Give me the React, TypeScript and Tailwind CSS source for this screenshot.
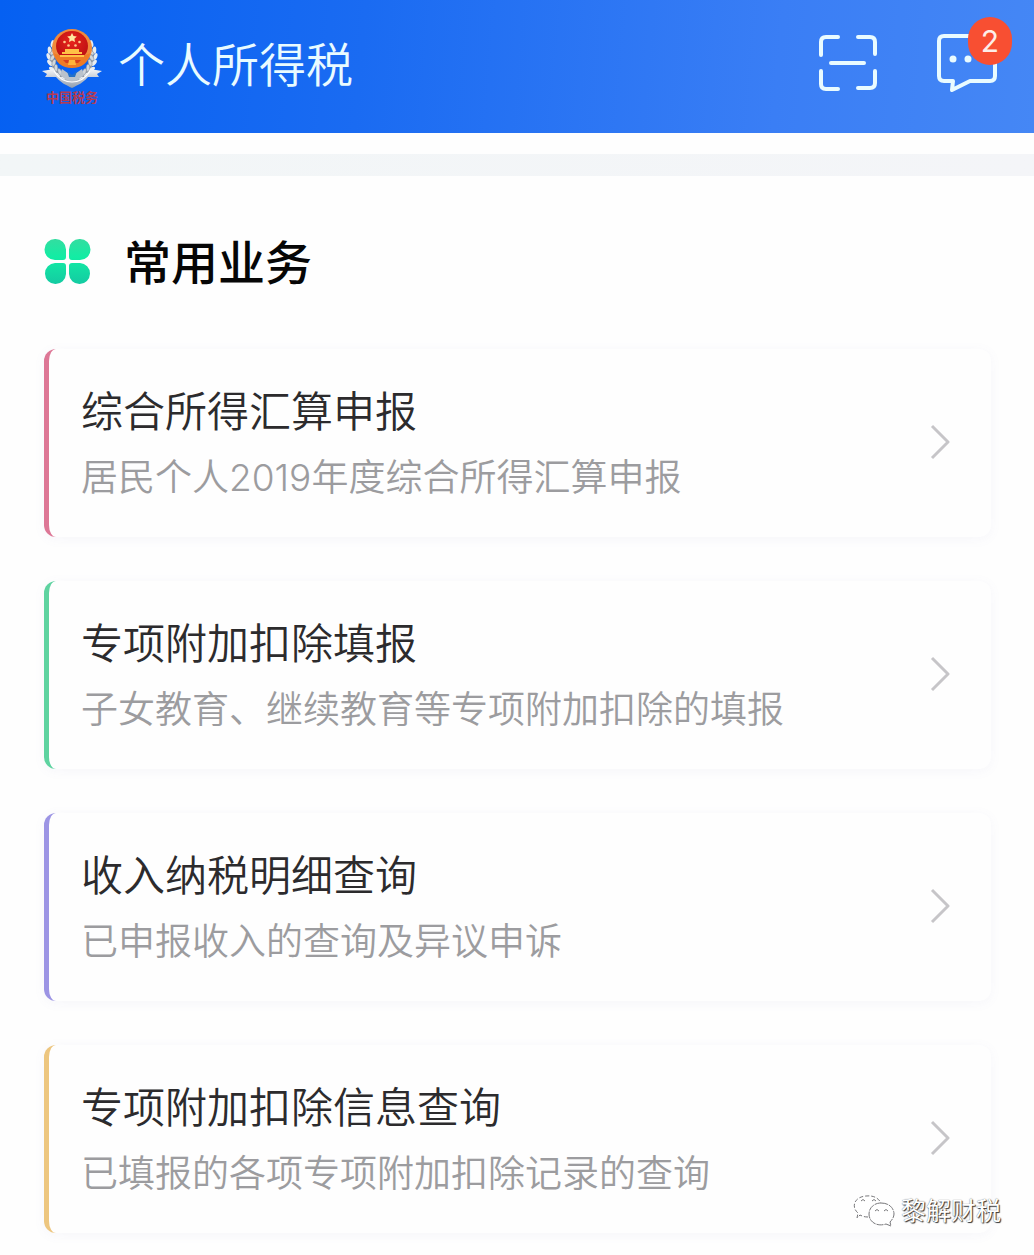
import React from 'react';

type Service = {
  title: string;
  description: string;
  accent: string;
};

const services: Service[] = [
  { title: '综合所得汇算申报', description: '居民个人2019年度综合所得汇算申报', accent: 'border-[#dd7796]' },
  { title: '专项附加扣除填报', description: '子女教育、继续教育等专项附加扣除的填报', accent: 'border-[#5ed3a0]' },
  { title: '收入纳税明细查询', description: '已申报收入的查询及异议申诉', accent: 'border-[#9c94e4]' },
  { title: '专项附加扣除信息查询', description: '已填报的各项专项附加扣除记录的查询', accent: 'border-[#edc67f]' },
];

const leaves = [
  [20, 48, 65], [15, 44, 50], [11, 39, 32], [9, 33, 12], [8, 27, -5], [9, 21, -22], [12, 15, -38],
];

function Emblem() {
  return (
    <svg viewBox="0 0 60 60" className="h-[60px] w-[60px]" aria-hidden="true">
      <defs>
        <linearGradient id="ribbon" x1="0" y1="0" x2="0" y2="1">
          <stop offset="0" stopColor="#f4f6f8" />
          <stop offset="1" stopColor="#8f9cae" />
        </linearGradient>
        <radialGradient id="disc" cx="0.5" cy="0.35" r="0.65">
          <stop offset="0" stopColor="#e8251c" />
          <stop offset="1" stopColor="#b90f12" />
        </radialGradient>
      </defs>
      {[false, true].map((mirrored) => (
        <g key={String(mirrored)} transform={mirrored ? 'translate(60 0) scale(-1 1)' : undefined}>
          <path d="M27 53C15 48 8 37 11 20" fill="none" stroke="#8d97a4" strokeWidth="4" />
          {leaves.map(([x, y, angle]) => (
            <g key={y} transform={`translate(${x} ${y}) rotate(${-angle})`}>
              <ellipse cx="-1.5" cy="0" rx="1.8" ry="3.6" fill="#e9edf0" transform="rotate(-25)" />
              <ellipse cx="3" cy="0" rx="1.8" ry="3.6" fill="#d2d7dc" stroke="#7d8590" strokeWidth="0.5" transform="rotate(28)" />
            </g>
          ))}
        </g>
      ))}
      <path d="M20 40l10 7 10-7 2 6-12 9-12-9z" fill="#b9c2cc" />
      <path d="M25 42l5 4 5-4-2 6h-6z" fill="#2470c8" />
      <path d="M0 42L12 40C16 48 22 52 30 51C38 52 44 48 48 40L60 42L55 45L57 48L46 48C41 54 36 56 30 59C24 56 19 54 14 48L3 48L5 45Z" fill="url(#ribbon)" />
      <path d="M12 42C17 50 23 53 30 53C37 53 43 50 48 42" fill="none" stroke="#ffffff" strokeWidth="1.2" />
      <ellipse cx="30" cy="19" rx="20" ry="19" fill="#f08a3c" />
      <ellipse cx="30" cy="17" rx="16" ry="15" fill="url(#disc)" />
      <path d="M12 24c4 4 32 4 36 0c-1 9-8 15-18 15c-10 0-17-6-18-15z" fill="#ee7b25" />
      <path d="M20 25h20v-2h-3v-3H23v3h-3zM18 28h24v-2H18z" fill="#ffc246" />
      <path d="M21 31h7v3h-4zM32 31h7l-3 3h-4z" fill="#d8401e" />
      <path d="M27 31h6l1 5h-8z" fill="#ffb43a" />
      <path d="M30 4l1.5 3 3.3.4-2.4 2.3.6 3.3-3-1.6-3 1.6.6-3.3-2.4-2.3 3.3-.4z" fill="#ffe9a0" />
      <circle cx="22.5" cy="13" r="1.3" fill="#ffc98a" />
      <circle cx="37.5" cy="13" r="1.3" fill="#ffc98a" />
      <circle cx="26.5" cy="16.5" r="1.3" fill="#ffc98a" />
      <circle cx="33.5" cy="16.5" r="1.3" fill="#ffc98a" />
    </svg>
  );
}

function ScanIcon() {
  return (
    <svg viewBox="0 0 60 58" className="h-[58px] w-[60px]" fill="none" stroke="#e9fbff" strokeWidth="4" strokeLinecap="round" strokeLinejoin="round" aria-hidden="true">
      <path d="M20 3H8Q3 3 3 8V21M40 3H52Q57 3 57 8V20M57 37V49Q57 54 52 54H40M20 55H8Q3 55 3 50V37M13 29H46" />
    </svg>
  );
}

function MessageIcon() {
  return (
    <svg viewBox="0 0 62 60" className="h-[60px] w-[62px]" fill="none" aria-hidden="true">
      <path d="M8 3H54Q59 3 59 8V43Q59 48 54 48H34L16 57L17 48H8Q3 48 3 43V8Q3 3 8 3Z" stroke="#e9fbff" strokeWidth="4" strokeLinejoin="round" />
      <circle cx="17" cy="26" r="3.5" fill="#e9fbff" />
      <circle cx="32" cy="26" r="3.5" fill="#e9fbff" />
      <circle cx="47" cy="26" r="3.5" fill="#e9fbff" />
    </svg>
  );
}

function CloverIcon() {
  return (
    <svg viewBox="0 0 48 48" className="h-12 w-12" aria-hidden="true">
      <defs>
        <linearGradient id="clover" x1="0" y1="0" x2="0" y2="48" gradientUnits="userSpaceOnUse">
          <stop offset="0" stopColor="#35dca0" />
          <stop offset="0.4" stopColor="#12eda4" />
          <stop offset="1" stopColor="#14c8a2" />
        </linearGradient>
      </defs>
      <path
        fill="url(#clover)"
        d="M11 1A10.5 10.5 0 0 1 22 12V19Q22 22 19 22H11A10.5 10.5 0 0 1 11 1ZM36 1A10.5 10.5 0 0 1 36 22H28Q25 22 25 19V12A10.5 10.5 0 0 1 36 1ZM11 25H19Q22 25 22 28V36A10.5 10.5 0 1 1 11 25ZM28 25H36A10.5 10.5 0 1 1 25 36V28Q25 25 28 25Z"
      />
    </svg>
  );
}

function Chevron() {
  return (
    <svg viewBox="0 0 20 36" className="h-9 w-5 shrink-0" fill="none" stroke="#c6c5c8" strokeWidth="3" strokeLinejoin="round" aria-hidden="true">
      <path d="M2 2L18 18L2 34" />
    </svg>
  );
}

function WeChatIcon() {
  return (
    <svg viewBox="0 0 42 32" className="h-8 w-[42px]" fill="#ffffff" stroke="#77777a" strokeWidth="1" aria-hidden="true">
      <path d="M15 22C11 22 9 21 7 20L4 23L5 18C-2 12 1 2 13 1C21 0 27 4 28 9" strokeDasharray="4 2" />
      <path d="M28 8C37 8 41 14 41 19C41 22 39 25 37 27L38 31L33 29C24 32 16 27 16 19C16 13 21 8 28 8Z" strokeDasharray="7 1" />
      <path d="M8 6Q10 3 12 6M19 6Q21 3 23 6M22 16Q24 13 26 16M31 16Q33 13 35 16" fill="none" />
    </svg>
  );
}

export default function App() {
  return (
    <div className="relative min-h-screen bg-[#fefefe] pb-[22px] font-['Inter','Noto_Sans_CJK_SC',sans-serif]">
      <header className="flex h-[133px] items-start justify-between bg-linear-[95deg,#0560f2,#1a6bf2_35%,#3a7ef5_75%,#4587f5] pr-9 pl-[42px]">
        <div className="flex items-start gap-4 pt-[29px]">
          <div className="flex w-[60px] flex-col items-center">
            <Emblem />
            <span className="text-[13px] leading-4 font-bold whitespace-nowrap text-[#b53a52]">中国税务</span>
          </div>
          <h1 className="text-[47px] leading-[72px] font-[350] whitespace-nowrap text-[#e9fbff]">个人所得税</h1>
        </div>
        <div className="flex gap-[58px] pt-[33px]">
          <button type="button" aria-label="扫一扫">
            <ScanIcon />
          </button>
          <button type="button" aria-label="消息" className="relative">
            <MessageIcon />
            <span className="absolute -top-4 -right-[14px] flex h-12 w-[44px] items-center justify-center rounded-full bg-[#f84f32] text-[30px] leading-none font-normal text-[#fdeee9]">
              2
            </span>
          </button>
        </div>
      </header>

      <div className="mt-[21px] h-[22px] bg-linear-to-r from-[#f2f6f7] to-[#f4f5f8]" />

      <main className="pt-[50px] pr-[43px] pl-11">
        <div className="flex items-center gap-8">
          <CloverIcon />
          <h2 className="pt-[2px] text-[47px] leading-[70px] font-medium text-[#060606]">常用业务</h2>
        </div>

        <ul className="mt-[51px] flex flex-col gap-11">
          {services.map((service) => (
            <li key={service.title}>
              <a
                href="#"
                className={`flex items-center justify-between rounded-xl border-l-[5px] bg-[#fefefe] pt-[33px] pr-[41px] pb-[35px] pl-8 shadow-[0_2px_12px_rgba(120,120,190,0.06)] ${service.accent}`}
              >
                <span className="flex flex-col gap-3">
                  <span className="text-[42px] leading-[60px] font-[350] text-[#2c2b2d]">{service.title}</span>
                  <span className="text-[37px] leading-[48px] font-[350] text-[#9c9c9f]">{service.description}</span>
                </span>
                <Chevron />
              </a>
            </li>
          ))}
        </ul>
      </main>

      <div className="absolute right-[33px] bottom-7 flex items-center gap-[6px]">
        <WeChatIcon />
        <span className="text-[25px] leading-8 text-white [text-shadow:1px_1px_1px_#333,0_0_1px_#555]">黎解财税</span>
      </div>
    </div>
  );
}
